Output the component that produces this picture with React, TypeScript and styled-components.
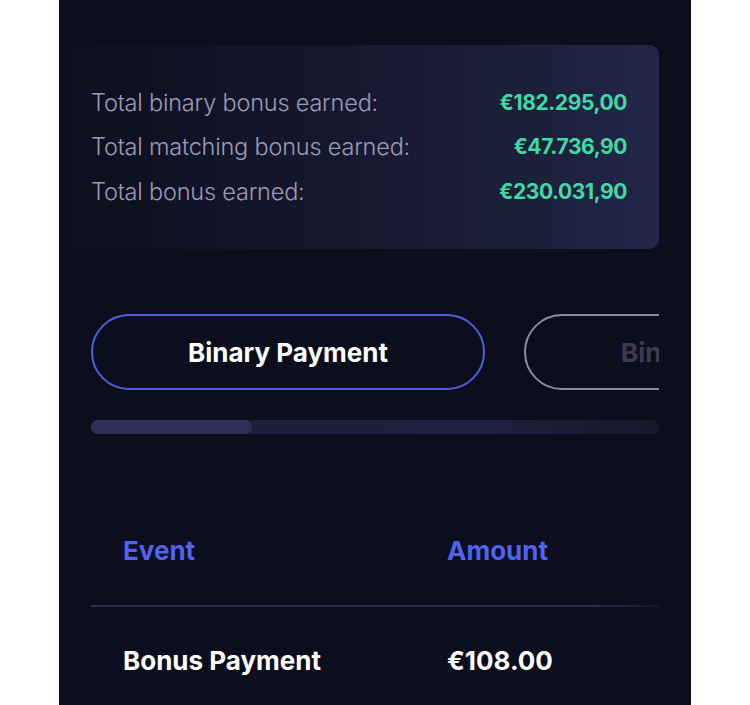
import React from "react";
import styled, { createGlobalStyle } from "styled-components";

const Global = createGlobalStyle`
  html, body { margin: 0; padding: 0; background: #ffffff; }
  body { font-family: "Inter", "Lato", sans-serif; }
`;

const Panel = styled.div`
  margin-left: 59px;
  width: 632px;
  min-height: 705px;
  box-sizing: border-box;
  background: #0c0e1d;
  padding: 45px 32px 0 0;
  overflow: hidden;
`;

const Card = styled.div`
  height: 204px;
  box-sizing: border-box;
  border-radius: 0 10px 10px 0;
  background: linear-gradient(90deg, #0d0f1f 0%, #15182c 45%, #1d203b 80%, #22264a 100%);
  padding: 42px 32px 0 32px;
  display: flex;
  flex-direction: column;
  gap: 14.5px;
`;

const StatRow = styled.div`
  display: flex;
  justify-content: space-between;
  align-items: center;
  height: 30px;
`;

const StatLabel = styled.span`
  font-size: 23.5px;
  font-weight: 300;
  color: #9a9bb5;
  letter-spacing: -0.2px;
`;

const StatValue = styled.span`
  font-size: 21px;
  font-weight: 700;
  color: #3edba4;
  letter-spacing: -0.4px;
`;

const Section = styled.div`
  padding-left: 32px;
`;

const Scroller = styled.div`
  margin-top: 65px;
  overflow: hidden;
`;

const TabRow = styled.div`
  display: flex;
  gap: 39px;
`;

const Tab = styled.div<{ $active?: boolean }>`
  flex-shrink: 0;
  width: 394px;
  height: 76px;
  box-sizing: border-box;
  border-radius: 38px;
  border: 2px solid ${(p) => (p.$active ? "#4b5fe0" : "#8c8c98")};
  display: flex;
  align-items: center;
  justify-content: center;
  font-size: 26px;
  font-weight: 700;
  color: ${(p) => (p.$active ? "#ffffff" : "#3b3d4e")};
`;

const Track = styled.div`
  margin-top: 30px;
  height: 14px;
  border-radius: 7px;
  background: linear-gradient(90deg, #1c1f38 0%, #1e2140 70%, #151729 100%);
`;

const Thumb = styled.div`
  height: 100%;
  border-radius: 7px;
  background: #2d3157;
`;

const Table = styled.div`
  margin-top: 63px;
`;

const Row = styled.div<{ $head?: boolean }>`
  display: grid;
  grid-template-columns: 324px 1fr;
  padding: 40px 0 40px 32px;
  border-bottom: ${(p) => (p.$head ? "2px solid transparent" : "none")};
  border-image: ${(p) =>
    p.$head ? "linear-gradient(90deg, #2a2e52 0%, #2a2e52 85%, #151729 100%) 1" : "none"};
  font-size: 26px;
  font-weight: 700;
  line-height: 28px;
  color: ${(p) => (p.$head ? "#4f63ee" : "#ffffff")};
`;

const stats = [
  ["Total binary bonus earned:", "€182.295,00"],
  ["Total matching bonus earned:", "€47.736,90"],
  ["Total bonus earned:", "€230.031,90"],
];

export default function App() {
  const thumbWidth = 161;
  return (
    <>
      <Global />
      <Panel>
        <Card>
          {stats.map(([l, v]) => (
            <StatRow key={l}>
              <StatLabel>{l}</StatLabel>
              <StatValue>{v}</StatValue>
            </StatRow>
          ))}
        </Card>
        <Section>
          <Scroller>
            <TabRow>
              <Tab $active>Binary Payment</Tab>
              <Tab>Binary Payment</Tab>
            </TabRow>
            <Track>
              <Thumb style={{ width: thumbWidth }} />
            </Track>
          </Scroller>
          <Table>
            <Row $head>
              <span>Event</span>
              <span>Amount</span>
            </Row>
            <Row>
              <span>Bonus Payment</span>
              <span>€108.00</span>
            </Row>
          </Table>
        </Section>
      </Panel>
    </>
  );
}
